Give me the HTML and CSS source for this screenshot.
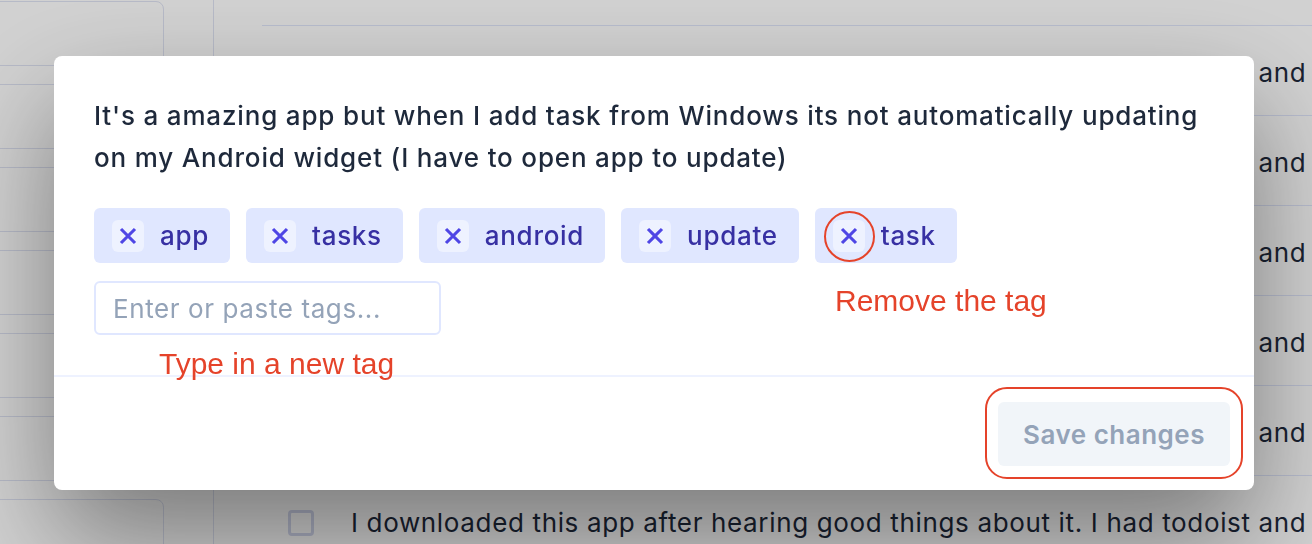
FILE: index.html
```html
<!DOCTYPE html>
<html lang="en">
<head>
<meta charset="utf-8">
<title>Edit tags</title>
<link rel="stylesheet" href="styles.css">
</head>
<body>
<div class="page">
  <aside class="sidebar">
    <div class="side-card"></div>
    <div class="side-card"></div>
    <div class="side-card"></div>
    <div class="side-card"></div>
    <div class="side-card"></div>
    <div class="side-card"></div>
    <div class="side-card"></div>
  </aside>
  <main class="list">
    <div class="row"><span class="cb"></span><p class="row-text">I downloaded this app after hearing good things about it. I had todoist and</p></div>
    <div class="row"><span class="cb"></span><p class="row-text">I downloaded this app after hearing good things about it. I had todoist and</p></div>
    <div class="row"><span class="cb"></span><p class="row-text">I downloaded this app after hearing good things about it. I had todoist and</p></div>
    <div class="row"><span class="cb"></span><p class="row-text">I downloaded this app after hearing good things about it. I had todoist and</p></div>
    <div class="row"><span class="cb"></span><p class="row-text">I downloaded this app after hearing good things about it. I had todoist and</p></div>
    <div class="row"><span class="cb"></span><p class="row-text">I downloaded this app after hearing good things about it. I had todoist and</p></div>
  </main>
</div>

<div class="overlay">
  <div class="modal">
    <div class="modal-body">
      <p class="review">It's a amazing app but when I add task from Windows its not automatically updating on my Android widget (I have to open app to update)</p>
      <div class="tags">
        <span class="tag"><span class="tag-x"><svg viewBox="0 0 24 24" width="28" height="28"><path d="M6 18L18 6M6 6l12 12"/></svg></span>app</span>
        <span class="tag"><span class="tag-x"><svg viewBox="0 0 24 24" width="28" height="28"><path d="M6 18L18 6M6 6l12 12"/></svg></span>tasks</span>
        <span class="tag"><span class="tag-x"><svg viewBox="0 0 24 24" width="28" height="28"><path d="M6 18L18 6M6 6l12 12"/></svg></span>android</span>
        <span class="tag"><span class="tag-x"><svg viewBox="0 0 24 24" width="28" height="28"><path d="M6 18L18 6M6 6l12 12"/></svg></span>update</span>
        <span class="tag"><span class="tag-x"><svg viewBox="0 0 24 24" width="28" height="28"><path d="M6 18L18 6M6 6l12 12"/></svg></span>task</span>
      </div>
      <input class="tag-input" type="text" placeholder="Enter or paste tags...">
    </div>
    <div class="modal-footer">
      <button class="save-btn" type="button">Save changes</button>
    </div>

    <span class="anno-circle"></span>
    <span class="anno-text anno-remove">Remove the tag</span>
    <span class="anno-text anno-type">Type in a new tag</span>
    <span class="anno-box"></span>
  </div>
</div>
</body>
</html>
```

FILE: styles.css
```css
* { box-sizing: border-box; }

html, body {
  margin: 0;
  padding: 0;
  width: 1312px;
  height: 544px;
  overflow: hidden;
  background: #ffffff;
  font-family: Inter, "Noto Sans", sans-serif;
}

.page {
  display: flex;
  height: 544px;
}

.sidebar {
  width: 214px;
  flex: none;
  border-right: 1px solid #dfe3f3;
  padding-top: 1px;
  display: flex;
  flex-direction: column;
  gap: 18px;
}

.side-card {
  margin-left: -12px;
  width: 176px;
  height: 65px;
  flex: none;
  border: 1px solid #dfe3f3;
  border-radius: 8px;
  background: #ffffff;
}

.list {
  flex: 1;
  padding-top: 25px;
  padding-left: 48px;
}

.row {
  height: 90px;
  border-top: 1px solid #e0e6fb;
  display: flex;
  align-items: center;
  gap: 37px;
  padding-left: 26px;
  padding-top: 4px;
}

.cb {
  width: 26px;
  height: 26px;
  flex: none;
  border: 3px solid #d3d8ee;
  border-radius: 4px;
}

.row-text {
  margin: 0;
  font-size: 26px;
  letter-spacing: 0.65px;
  color: #1e293b;
  white-space: nowrap;
}

.overlay {
  position: fixed;
  inset: 0;
  background: rgba(0, 0, 0, 0.18);
  padding: 56px 0 0 54px;
}

.modal {
  position: relative;
  width: 1200px;
  background: #ffffff;
  border-radius: 8px;
  box-shadow: 0 50px 110px rgba(0, 0, 0, 0.42);
}

.modal-body {
  padding: 39px 40px 40px;
}

.review {
  margin: 0;
  font-size: 26px;
  letter-spacing: 0.83px;
  font-weight: 500;
  line-height: 42px;
  color: #1e293b;
}

.tags {
  display: flex;
  flex-wrap: wrap;
  gap: 16px;
  margin-top: 29px;
}

.tag {
  display: inline-flex;
  align-items: center;
  gap: 16px;
  height: 55px;
  padding: 0 21px 0 18px;
  background: #e0e7ff;
  border-radius: 6px;
  font-size: 26px;
  letter-spacing: 0.7px;
  font-weight: 500;
  color: #3730a3;
}

.tag-x {
  width: 32px;
  height: 32px;
  flex: none;
  border-radius: 6px;
  background: #eef2ff;
  display: flex;
  align-items: center;
  justify-content: center;
}

.tag-x svg {
  fill: none;
  stroke: #4f46e5;
  stroke-width: 2.7;
  stroke-linecap: butt;
}

.tag-input {
  display: block;
  margin-top: 18px;
  width: 347px;
  height: 54px;
  border: 2px solid #e0e7ff;
  border-radius: 6px;
  padding: 0 17px;
  font-family: Inter, "Noto Sans", sans-serif;
  font-size: 26px;
  letter-spacing: 0.6px;
  color: #1e293b;
  outline: none;
}

.tag-input::placeholder {
  color: #94a3b8;
}

.modal-footer {
  border-top: 2px solid #eef2ff;
  padding: 25px 24px 24px;
  display: flex;
  justify-content: flex-end;
}

.save-btn {
  height: 64px;
  padding: 0 25px;
  border: none;
  border-radius: 6px;
  background: #f1f5f9;
  color: #94a3b8;
  font-family: Inter, "Noto Sans", sans-serif;
  font-size: 26px;
  letter-spacing: 0.5px;
  font-weight: 600;
}

.anno-circle {
  position: absolute;
  left: 770px;
  top: 155px;
  width: 51px;
  height: 51px;
  border: 2px solid #e5432a;
  border-radius: 50%;
}

.anno-box {
  position: absolute;
  left: 931px;
  top: 331px;
  width: 258px;
  height: 92px;
  border: 2.5px solid #e5432a;
  border-radius: 22px;
}

.anno-text {
  position: absolute;
  font-family: "Liberation Sans", Arial, sans-serif;
  font-size: 30px;
  color: #e5432a;
  white-space: nowrap;
  line-height: normal;
}

.anno-remove {
  left: 781px;
  top: 228px;
}

.anno-type {
  left: 105px;
  top: 291px;
}
```
